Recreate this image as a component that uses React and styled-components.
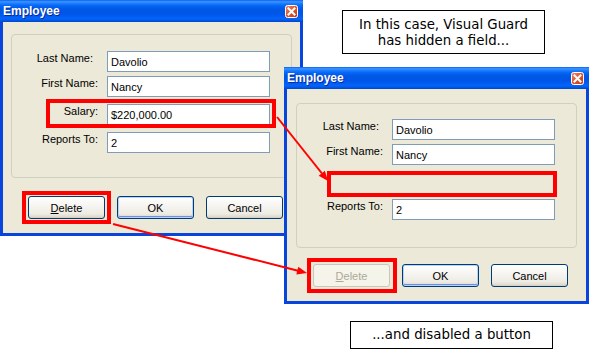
import React from 'react';
import styled, { createGlobalStyle } from 'styled-components';

const GlobalStyle = createGlobalStyle`
  html, body {
    margin: 0;
    padding: 0;
    background: #ffffff;
  }
  body {
    font-family: "Liberation Sans", Arial, sans-serif;
  }
`;

const Desktop = styled.div`
  position: relative;
  width: 589px;
  height: 355px;
  overflow: hidden;
  background: #ffffff;
`;

// windows sit on a free canvas, so their place is content
const Window = styled.div`
  position: absolute;
  left: ${p => p.$left}px;
  top: ${p => p.$top}px;
  width: ${p => p.$width}px;
  display: flex;
  flex-direction: column;
  font-family: "Liberation Sans", Arial, sans-serif;
  font-size: 11px;
  color: #000;
`;

const TitleBar = styled.div`
  height: 22px;
  box-sizing: border-box;
  display: flex;
  align-items: center;
  justify-content: space-between;
  padding: 0 5px 0 3px;
  background: linear-gradient(
    to bottom,
    #0a5ff2 0%,
    #3d95ff 8%,
    #1a7dff 16%,
    #0566f5 26%,
    #0058e6 40%,
    #0055e5 60%,
    #005cf2 74%,
    #0464fa 84%,
    #0058ea 92%,
    #0045c8 100%
  );
`;

const Title = styled.span`
  color: #ffffff;
  font-weight: bold;
  font-size: 12px;
  text-shadow: 1px 1px 0 #0a2a9a;
`;

const CloseBox = styled.svg`
  display: block;
  flex-shrink: 0;
`;

const Body = styled.div`
  background: #ece9d8;
  border: 3px solid #0845dc;
  border-top: none;
  padding: ${p => p.$pt}px ${p => p.$px}px 14px;
  display: flex;
  flex-direction: column;
  gap: ${p => p.$gap}px;
`;

const GroupBox = styled.div`
  height: ${p => p.$height}px;
  box-sizing: border-box;
  border: 1px solid #d0d0bf;
  border-radius: 4px;
  padding-top: ${p => p.$pt}px;
  display: flex;
  flex-direction: column;
`;

const FieldRow = styled.div`
  position: relative;
  display: flex;
  align-items: flex-start;
  gap: 9px;
  height: 21px;
  margin-top: ${p => p.$mt}px;
`;

const FieldLabel = styled.span`
  width: 86px;
  box-sizing: border-box;
  padding-right: ${p => p.$shift || 0}px;
  text-align: right;
  line-height: 13px;
  padding-top: 1px;
  white-space: nowrap;
`;

const TextField = styled.div`
  width: 163px;
  height: 21px;
  box-sizing: border-box;
  border: 1px solid #7f9db9;
  background: #ffffff;
  padding: 0 3px;
  display: flex;
  align-items: center;
  white-space: nowrap;
`;

const ButtonRow = styled.div`
  display: flex;
  justify-content: flex-end;
  gap: 12px;
  padding-right: 9px;
`;

const Slot = styled.div`
  position: relative;
  display: flex;
`;

const XpButton = styled.button`
  width: 77px;
  height: 23px;
  box-sizing: border-box;
  padding: 0;
  font-family: "Liberation Sans", Arial, sans-serif;
  font-size: 11px;
  border-radius: 3px;
  color: ${p => (p.disabled ? '#aca899' : '#000')};
  border: 1px solid ${p => (p.disabled ? '#c9c7ba' : '#003c74')};
  background: ${p =>
    p.disabled
      ? '#f5f4ea'
      : 'linear-gradient(to bottom, #ffffff 0%, #f6f5f1 40%, #edebe3 80%, #d8d3c6 100%)'};
  box-shadow: ${p =>
    p.$default
      ? 'inset 0 0 0 1px #b9d1f8, inset 0 -1px 0 1px #6b8fe6'
      : p.disabled
      ? 'none'
      : 'inset 0 -1px 0 #d6d0c5'};
  cursor: default;

  u {
    text-decoration: underline;
  }
`;

// red annotation frames drawn over the dialog
const Highlight = styled.span`
  position: absolute;
  top: ${p => p.$t}px;
  right: ${p => p.$r}px;
  bottom: ${p => p.$b}px;
  left: ${p => p.$l}px;
  border: 4px solid #ff0000;
  pointer-events: none;
  z-index: 2;
`;

const Callout = styled.div`
  position: absolute;
  left: ${p => p.$left}px;
  top: ${p => p.$top}px;
  width: 203px;
  height: ${p => p.$height}px;
  box-sizing: border-box;
  border: 1px solid #000;
  background: #ffffff;
  font-family: "DejaVu Sans", Verdana, sans-serif;
  font-size: 13.33px;
  line-height: 16px;
  color: #000;
  text-align: center;
  display: flex;
  align-items: center;
  justify-content: center;
  padding-top: ${p => p.$pt || 0}px;
`;

const ArrowLayer = styled.svg`
  position: absolute;
  left: 0;
  top: 0;
  pointer-events: none;
  z-index: 5;
`;

const Close = () => (
  <CloseBox width="13" height="13" viewBox="0 0 13 13">
    <defs>
      <linearGradient id="closeGrad" x1="0" y1="0" x2="1" y2="1">
        <stop offset="0" stopColor="#f08a6a" />
        <stop offset="0.5" stopColor="#e0532d" />
        <stop offset="1" stopColor="#c23a12" />
      </linearGradient>
    </defs>
    <rect x="0.5" y="0.5" width="12" height="12" rx="2" fill="url(#closeGrad)" stroke="#ffffff" />
    <path d="M3.5 3.5 L9.5 9.5 M9.5 3.5 L3.5 9.5" stroke="#ffffff" strokeWidth="2" strokeLinecap="square" />
  </CloseBox>
);

const firstForm = [
  { label: 'Last Name:', value: 'Davolio', mt: 0, shift: 5 },
  { label: 'First Name:', value: 'Nancy', mt: 4 },
  { label: 'Salary:', value: '$220,000.00', mt: 7, mark: { t: -5, r: 15, b: -3, l: 34 } },
  { label: 'Reports To:', value: '2', mt: 7 },
];

const secondForm = [
  { label: 'Last Name:', value: 'Davolio', mt: 0, shift: 4 },
  { label: 'First Name:', value: 'Nancy', mt: 4 },
  { hidden: true, mt: 7, mark: { t: -1, r: 19, b: -4, l: 30 } },
  { label: 'Reports To:', value: '2', mt: 6 },
];

const Dialog = ({ left, top, width, pad, groupHeight, groupPt, gap, rows, deleteDisabled, deleteMark }) => (
  <Window $left={left} $top={top} $width={width}>
    <TitleBar>
      <Title>Employee</Title>
      <Close />
    </TitleBar>
    <Body $pt={pad.top} $px={pad.x} $gap={gap}>
      <GroupBox $height={groupHeight} $pt={groupPt}>
        {rows.map((row, i) => (
          <FieldRow key={i} $mt={row.mt}>
            {!row.hidden && (
              <>
                <FieldLabel $shift={row.shift}>{row.label}</FieldLabel>
                <TextField>{row.value}</TextField>
              </>
            )}
            {row.mark && <Highlight $t={row.mark.t} $r={row.mark.r} $b={row.mark.b} $l={row.mark.l} />}
          </FieldRow>
        ))}
      </GroupBox>
      <ButtonRow>
        <Slot>
          <XpButton disabled={deleteDisabled}>
            <u>D</u>elete
          </XpButton>
          <Highlight $t={deleteMark.t} $r={deleteMark.r} $b={deleteMark.b} $l={deleteMark.l} />
        </Slot>
        <XpButton $default>OK</XpButton>
        <XpButton>Cancel</XpButton>
      </ButtonRow>
    </Body>
  </Window>
);

export default function App() {
  return (
    <>
      <GlobalStyle />
      <Desktop>
        <Dialog
          left={0}
          top={0}
          width={303}
          pad={{ top: 12, x: 8 }}
          gap={18}
          groupHeight={144}
          groupPt={16}
          rows={firstForm}
          deleteMark={{ t: -5, r: -6, b: -5, l: -6 }}
        />
        <Dialog
          left={284}
          top={67}
          width={305}
          pad={{ top: 14, x: 9 }}
          gap={16}
          groupHeight={145}
          groupPt={15}
          rows={secondForm}
          deleteDisabled
          deleteMark={{ t: -6, r: -7, b: -6, l: -6 }}
        />

        <Callout $left={342} $top={10} $height={44} $pt={2}>
          In this case, Visual Guard
          <br />
          has hidden a field...
        </Callout>
        <Callout $left={350} $top={321} $height={28}>
          ...and disabled a button
        </Callout>

        <ArrowLayer width="589" height="355" viewBox="0 0 589 355">
          <line x1="277" y1="117" x2="322" y2="173.5" stroke="#ff0000" strokeWidth="2" />
          <polygon points="328,181 318.7,175.7 324.9,170.7" fill="#ff0000" />
          <line x1="113" y1="224" x2="298" y2="270.7" stroke="#ff0000" strokeWidth="2" />
          <polygon points="307,273 296.3,274.4 298.3,266.7" fill="#ff0000" />
        </ArrowLayer>
      </Desktop>
    </>
  );
}
